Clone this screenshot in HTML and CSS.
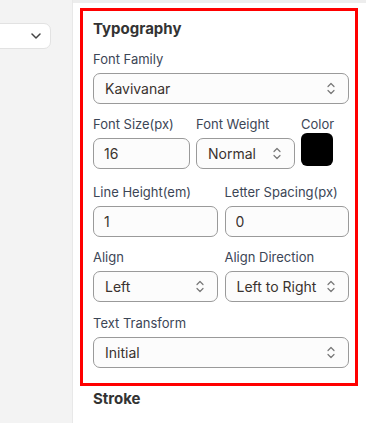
FILE: index.html
```html
<!DOCTYPE html>
<html lang="en">
<head>
    <meta charset="UTF-8">
    <meta name="viewport" content="width=device-width, initial-scale=1.0">
    <title>Typography</title>
    <link rel="stylesheet" href="styles.css">
</head>
<body>
<div class="layout">
    <div class="sidebar">
        <div class="sideSelect">
            <svg width="10" height="6" viewBox="0 0 10 6"><path d="M1 1l4 4 4-4" fill="none" stroke="#444" stroke-width="1.5" stroke-linecap="round" stroke-linejoin="round"/></svg>
        </div>
    </div>

    <div class="panel">
        <div class="topStrip"></div>
        <div class="section highlight">
            <h3 class="title">Typography</h3>

            <div class="field">
                <label>Font Family</label>
                <div class="selectBox">
                    <select><option>Kavivanar</option></select>
                    <svg class="updown" width="8" height="13" viewBox="0 0 8 13"><path d="M1 4.5l3-3 3 3M1 8.5l3 3 3-3" fill="none" stroke="#777" stroke-width="1.2" stroke-linecap="round" stroke-linejoin="round"/></svg>
                </div>
            </div>

            <div class="row rowThree">
                <div class="field">
                    <label>Font Size(px)</label>
                    <input type="text" value="16">
                </div>
                <div class="field">
                    <label>Font Weight</label>
                    <div class="selectBox">
                        <select><option>Normal</option></select>
                        <svg class="updown" width="8" height="13" viewBox="0 0 8 13"><path d="M1 4.5l3-3 3 3M1 8.5l3 3 3-3" fill="none" stroke="#777" stroke-width="1.2" stroke-linecap="round" stroke-linejoin="round"/></svg>
                    </div>
                </div>
                <div class="field colorField">
                    <label>Color</label>
                    <div class="swatch"></div>
                </div>
            </div>

            <div class="row rowTwo">
                <div class="field">
                    <label>Line Height(em)</label>
                    <input type="text" value="1">
                </div>
                <div class="field">
                    <label>Letter Spacing(px)</label>
                    <input type="text" value="0">
                </div>
            </div>

            <div class="row rowTwo">
                <div class="field">
                    <label>Align</label>
                    <div class="selectBox">
                        <select><option>Left</option></select>
                        <svg class="updown" width="8" height="13" viewBox="0 0 8 13"><path d="M1 4.5l3-3 3 3M1 8.5l3 3 3-3" fill="none" stroke="#777" stroke-width="1.2" stroke-linecap="round" stroke-linejoin="round"/></svg>
                    </div>
                </div>
                <div class="field">
                    <label>Align Direction</label>
                    <div class="selectBox">
                        <select><option>Left to Right</option></select>
                        <svg class="updown" width="8" height="13" viewBox="0 0 8 13"><path d="M1 4.5l3-3 3 3M1 8.5l3 3 3-3" fill="none" stroke="#777" stroke-width="1.2" stroke-linecap="round" stroke-linejoin="round"/></svg>
                    </div>
                </div>
            </div>

            <div class="field lastField">
                <label>Text Transform</label>
                <div class="selectBox">
                    <select><option>Initial</option></select>
                    <svg class="updown" width="8" height="13" viewBox="0 0 8 13"><path d="M1 4.5l3-3 3 3M1 8.5l3 3 3-3" fill="none" stroke="#777" stroke-width="1.2" stroke-linecap="round" stroke-linejoin="round"/></svg>
                </div>
            </div>
        </div>

        <div class="section">
            <h3 class="title">Stroke</h3>
        </div>
    </div>
</div>
</body>
</html>
```

FILE: styles.css
```css
body {
    margin: 0;
    padding: 0;
    font-family: Inter, "Noto Sans", sans-serif;
    background-color: #fff;
}
.layout {
    display: flex;
    height: 423px;
    overflow: hidden;
}
.sidebar {
    width: 72px;
    flex-shrink: 0;
    background-color: #f3f3f3;
    border-right: 1px solid #e8e8e8;
    padding-top: 23px;
}
.sideSelect {
    width: 50px;
    height: 24px;
    margin-left: -10px;
    background-color: #fff;
    border: 1px solid #e2e2e2;
    border-radius: 7px;
    display: flex;
    align-items: center;
    justify-content: flex-end;
    padding-right: 9px;
}
.sideSelect svg {
    display: block;
}
.panel {
    flex: 1;
    padding-left: 7px;
    padding-right: 8px;
}
.topStrip {
    height: 3px;
    margin-left: -7px;
    margin-right: -8px;
    background-color: #ededed;
    margin-bottom: 5px;
}

/* 红框区域 */
.highlight {
    border: 3px solid #ff0000;
    padding: 9px 6px 15px 10px;
}
.section {
    padding-left: 13px;
}
.section.highlight {
    padding-left: 10px;
}
.title {
    margin: 0 0 13px 0;
    font-size: 15px;
    line-height: 18px;
    font-weight: 700;
    color: #333;
}
.section:not(.highlight) .title {
    margin-top: 4px;
}

.field {
    display: flex;
    flex-direction: column;
    margin-bottom: 12px;
}
.field label {
    font-size: 13px;
    line-height: 16px;
    color: #3c4656;
    margin-bottom: 6px;
    white-space: nowrap;
}
.row .field {
    margin-bottom: 0;
}
.row {
    display: grid;
    margin-bottom: 12px;
}
.rowThree {
    grid-template-columns: 97px 98px 32px;
    column-gap: 7px;
    margin-bottom: 15px;
}
.rowThree .field:nth-child(2) {
    margin-left: -1px;
}
.rowThree .colorField {
    margin-left: -1px;
}
.rowTwo {
    grid-template-columns: 1fr 1fr;
    column-gap: 7px;
}
.lastField {
    margin-bottom: 0;
    margin-top: 13px;
}

/* 输入框和下拉框样式 */
input[type="text"], select {
    box-sizing: border-box;
    width: 100%;
    height: 31px;
    border: 1px solid #9a9a9a;
    border-radius: 7px;
    background-color: #fcfcfc;
    padding: 0 10px;
    font-family: Inter, "Noto Sans", sans-serif;
    font-size: 14px;
    color: #3a322e;
    outline: none;
}
select {
    appearance: none;
    -webkit-appearance: none;
    padding-left: 11px;
}
.selectBox {
    position: relative;
}
.selectBox .updown {
    position: absolute;
    right: 14px;
    top: 9px;
    pointer-events: none;
}
.colorField label {
    margin-bottom: 1px;
}
.swatch {
    width: 32px;
    height: 33px;
    border-radius: 6px;
    background-color: #000;
}
```
